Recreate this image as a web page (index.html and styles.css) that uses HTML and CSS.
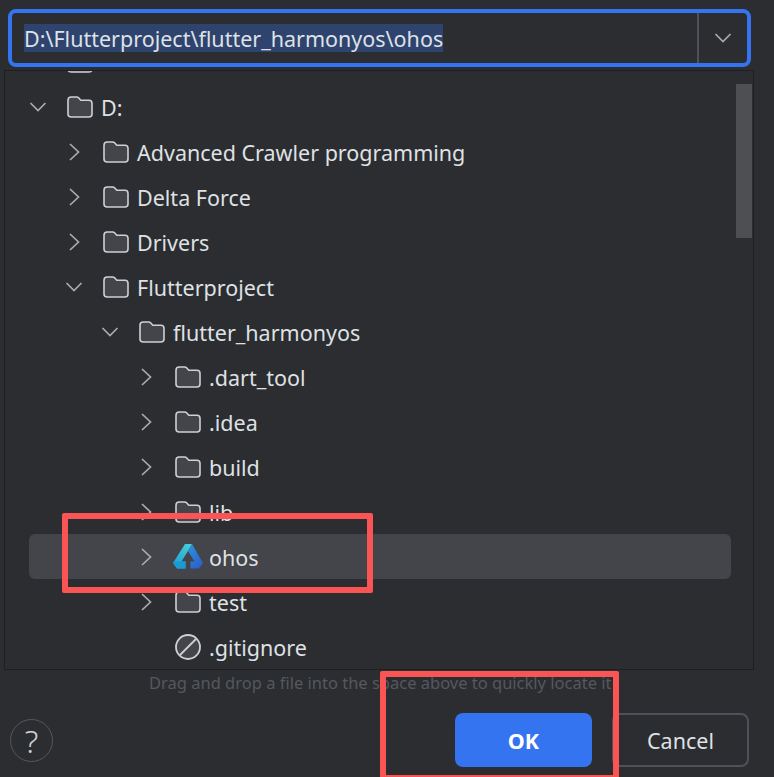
FILE: index.html
```html
<!DOCTYPE html>
<html lang="en">
<head>
<meta charset="utf-8">
<title>Open file</title>
<link rel="stylesheet" href="styles.css">
</head>
<body>
<svg class="defs" width="0" height="0" aria-hidden="true">
  <defs>
    <symbol id="folder" viewBox="0 0 26 22">
      <path d="M1 4.200C1 2.400 2.400 1 4.200 1H9.600C10.500 1 11.200 1.400 11.800 2L13.800 4.200H22C23.800 4.200 25 5.500 25 7.200V18C25 19.800 23.800 21 22 21H4.200C2.400 21 1 19.800 1 18Z" fill="#43454a" stroke="#ced0d6" stroke-width="1.600" stroke-linejoin="round"/>
    </symbol>
    <symbol id="chev-right" viewBox="0 0 20 20">
      <path d="M6 2L14.500 10L6 18" fill="none" stroke="#a8abb0" stroke-width="1.700"/>
    </symbol>
    <symbol id="chev-down" viewBox="0 0 20 20">
      <path d="M2.500 6L10 13.500L17.500 6" fill="none" stroke="#a8abb0" stroke-width="1.700"/>
    </symbol>
  </defs>
</svg>
<div class="app">
  <div class="path-field">
    <div class="path-text"><span class="selected">D:\Flutterproject\flutter_harmonyos\ohos</span></div>
    <div class="path-drop"><svg class="drop-chev"><use href="#chev-down"/></svg></div>
  </div>

  <div class="tree">
    <div class="tree-list">
      <div class="row l0"><span class="chev-slot"></span><svg class="icon"><use href="#folder"/></svg></div>
      <div class="row l0"><svg class="chev"><use href="#chev-down"/></svg><svg class="icon"><use href="#folder"/></svg><span class="label">D:</span></div>
      <div class="row l1"><svg class="chev"><use href="#chev-right"/></svg><svg class="icon"><use href="#folder"/></svg><span class="label">Advanced Crawler programming</span></div>
      <div class="row l1"><svg class="chev"><use href="#chev-right"/></svg><svg class="icon"><use href="#folder"/></svg><span class="label">Delta Force</span></div>
      <div class="row l1"><svg class="chev"><use href="#chev-right"/></svg><svg class="icon"><use href="#folder"/></svg><span class="label">Drivers</span></div>
      <div class="row l1"><svg class="chev"><use href="#chev-down"/></svg><svg class="icon"><use href="#folder"/></svg><span class="label">Flutterproject</span></div>
      <div class="row l2"><svg class="chev"><use href="#chev-down"/></svg><svg class="icon"><use href="#folder"/></svg><span class="label">flutter_harmonyos</span></div>
      <div class="row l3"><svg class="chev"><use href="#chev-right"/></svg><svg class="icon"><use href="#folder"/></svg><span class="label">.dart_tool</span></div>
      <div class="row l3"><svg class="chev"><use href="#chev-right"/></svg><svg class="icon"><use href="#folder"/></svg><span class="label">.idea</span></div>
      <div class="row l3"><svg class="chev"><use href="#chev-right"/></svg><svg class="icon"><use href="#folder"/></svg><span class="label">build</span></div>
      <div class="row l3"><svg class="chev"><use href="#chev-right"/></svg><svg class="icon"><use href="#folder"/></svg><span class="label">lib</span></div>
      <div class="row l3 row-selected"><svg class="chev"><use href="#chev-right"/></svg>
        <svg class="logo" viewBox="0 0 30 25">
          <defs>
            <linearGradient id="lg-left" x1="0.7" y1="0" x2="0.3" y2="1">
              <stop offset="0" stop-color="#45cbd2"/>
              <stop offset="1" stop-color="#1f9fd8"/>
            </linearGradient>
            <linearGradient id="lg-right" x1="0.2" y1="0" x2="0.8" y2="1">
              <stop offset="0" stop-color="#2f8fe0"/>
              <stop offset="1" stop-color="#2b5fc9"/>
            </linearGradient>
          </defs>
          <path d="M12 0H19L15 7L8.500 17.500H12.500V24.500H4L0 19Z" fill="url(#lg-left)"/>
          <path d="M19 0L30 19L26 24.500H17.500V17.500H21.500L15 7Z" fill="url(#lg-right)"/>
          <path d="M0 19L3 17.500H12.500V24.500H4Z" fill="#1b9ad6"/>
        </svg>
        <span class="label">ohos</span></div>
      <div class="row l3"><svg class="chev"><use href="#chev-right"/></svg><svg class="icon"><use href="#folder"/></svg><span class="label">test</span></div>
      <div class="row l3"><span class="chev-slot"></span>
        <svg class="icon icon-round" viewBox="0 0 26 26"><circle cx="13" cy="13" r="12" fill="#43454a" stroke="#ced0d6" stroke-width="1.800"/><path d="M5 21L21 5" stroke="#ced0d6" stroke-width="1.800"/></svg>
        <span class="label">.gitignore</span></div>
    </div>
    <div class="scroll-thumb"></div>
  </div>

  <div class="hint">Drag and drop a file into the space above to quickly locate it</div>

  <div class="footer">
    <div class="help">?</div>
    <div class="actions">
      <div class="btn btn-primary">OK</div>
      <div class="btn btn-secondary">Cancel</div>
    </div>
  </div>

  <div class="mark mark-row"></div>
  <div class="mark mark-ok"></div>
</div>
</body>
</html>
```
FILE: styles.css
```css
* { box-sizing: border-box; }
html, body { margin: 0; padding: 0; background: #2b2d30; }
body { font-family: "Noto Sans", "Open Sans", sans-serif; color: #dfe1e5; }
.defs { position: absolute; }
.app { position: relative; width: 774px; height: 777px; overflow: hidden; background: #2b2d30; }

.path-field {
  display: flex; align-items: stretch;
  margin: 9px 23px 0 8px; height: 58px;
  border: 4px solid #3574f0; border-radius: 8px;
}
.path-text { flex: 1; display: flex; align-items: center; padding-left: 12px; font-size: 21.500px; }
.selected { display: block; height: 28px; padding-top: 1px; line-height: 27px; background: #2e436e; white-space: nowrap; }
.path-drop { width: 50px; border-left: 2px solid #4e5157; display: flex; align-items: center; justify-content: center; }
.drop-chev { width: 20px; height: 20px; }

.tree {
  position: relative; overflow: hidden;
  margin: 3px 20px 0 4px; height: 600px;
  border: 1px solid #1e1f22;
}
.tree-list { margin: -32px 0 0 24px; width: 702px; }
.row { display: flex; align-items: center; height: 45px; font-size: 21.500px; white-space: nowrap; border-radius: 6px; }
.l0 { padding-left: 0; }
.l1 { padding-left: 36px; }
.l2 { padding-left: 72px; }
.l3 { padding-left: 108px; }
.row-selected { background: #43454a; }
.chev, .chev-slot { flex: none; width: 20px; height: 20px; margin: 0 19px 0 -1px; }
.icon { flex: none; width: 26px; height: 22px; margin-right: 8px; }
.icon-round { height: 26px; }
.logo { flex: none; width: 30px; height: 25px; margin: 0 6px 0 -2px; }
.label { padding-top: 2px; line-height: 43px; }
.scroll-thumb { position: absolute; top: 13px; right: 1px; width: 16px; height: 154px; background: #4e4f52; }

.hint { height: 26px; padding-left: 149px; font-size: 16.500px; line-height: 26px; color: #55585e; white-space: nowrap; }

.footer { display: flex; align-items: center; justify-content: space-between; height: 54px; margin-top: 17px; padding: 0 25px 0 10px; }
.help { width: 43px; height: 43px; border: 1.500px solid #55575b; border-radius: 50%; display: flex; align-items: center; justify-content: center; font-size: 32px; font-weight: 300; color: #ced0d6; }
.actions { display: flex; gap: 20px; }
.btn { width: 137px; height: 54px; border-radius: 8px; display: flex; align-items: center; justify-content: center; font-size: 21.500px; }
.btn-primary { background: #3574f0; color: #fff; font-weight: 700; }
.btn-secondary { border: 2px solid #4e5157; color: #dfe1e5; }

.mark { position: absolute; border: 6px solid #fb5454; border-radius: 2px; }
.mark-row { left: 62px; top: 513px; width: 311px; height: 80px; }
.mark-ok { left: 380px; top: 671px; width: 239px; height: 110px; }
```
